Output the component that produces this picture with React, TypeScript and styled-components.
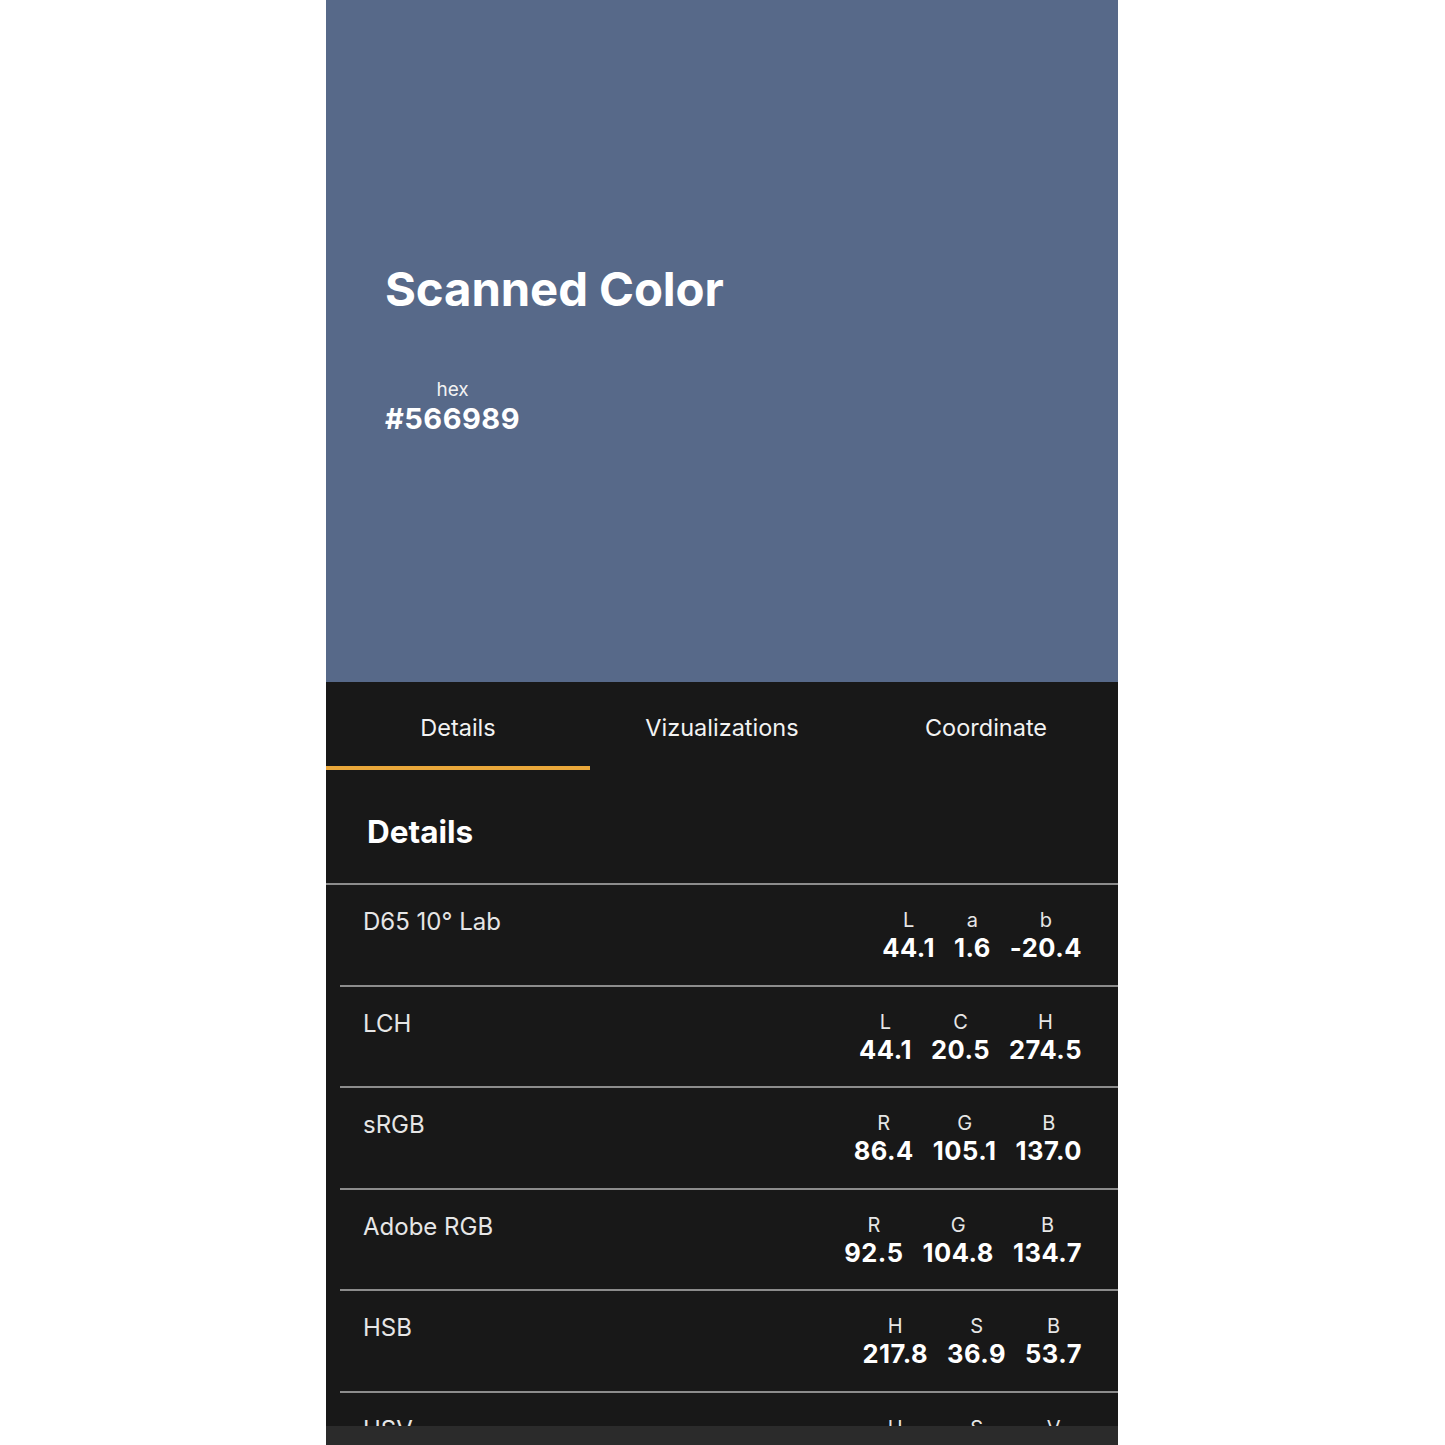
import React from "react";
import styled, { createGlobalStyle } from "styled-components";

const Global = createGlobalStyle`
  html, body { margin: 0; padding: 0; background: #ffffff; }
  body { font-family: Inter, "Noto Sans", "Liberation Sans", sans-serif; }
  * { box-sizing: border-box; }
`;

const Phone = styled.div`
  width: 792px;
  height: 1445px;
  margin: 0 0 0 326px;
  position: relative;
  overflow: hidden;
  display: flex;
  flex-direction: column;
  background: #181818;
`;

const Swatch = styled.section<{ $color: string }>`
  height: 682px;
  flex: none;
  background: ${(p) => p.$color};
  padding: 261px 0 0 59px;
  color: #ffffff;
`;

const Title = styled.h1`
  margin: 0;
  font-size: 47.3px;
  font-weight: 700;
  letter-spacing: -0.1px;
  line-height: 56px;
`;

const HexBlock = styled.div`
  margin-top: 60px;
  display: inline-flex;
  flex-direction: column;
  align-items: center;
`;

const HexLabel = styled.span`
  font-size: 19px;
  font-weight: 400;
  line-height: 25px;
  color: #f2f2f2;
`;

const HexValue = styled.span`
  font-size: 29px;
  font-weight: 700;
  line-height: 34px;
  letter-spacing: 0.5px;
`;

const Tabs = styled.nav`
  display: grid;
  grid-template-columns: repeat(3, 1fr);
  height: 88px;
  flex: none;
`;

const Tab = styled.div<{ $active?: boolean }>`
  display: flex;
  align-items: center;
  justify-content: center;
  padding-top: 6px;
  color: #f2f2f2;
  font-size: 23.5px;
  font-weight: 400;
  border-bottom: 4px solid ${(p) => (p.$active ? "#e9a73a" : "transparent")};
`;

const SectionHead = styled.h2`
  margin: 0;
  height: 115px;
  flex: none;
  display: flex;
  align-items: center;
  padding: 10px 0 0 41px;
  font-size: 31.5px;
  font-weight: 700;
  color: #ffffff;
  border-bottom: 2px solid #8c8c8c;
`;

const List = styled.div`
  display: flex;
  flex-direction: column;
`;

const Row = styled.div`
  height: 101.5px;
  flex: none;
  margin-left: 14px;
  padding: 22px 36px 0 23px;
  display: flex;
  justify-content: space-between;
  align-items: flex-start;
  border-bottom: 2px solid #8c8c8c;
`;

const RowLabel = styled.span`
  font-size: 24px;
  font-weight: 400;
  color: #e6e6e6;
  line-height: 30px;
  letter-spacing: 0px;
`;

const Values = styled.div`
  display: flex;
  gap: 19px;
  margin-top: 1px;
`;

const ValueCol = styled.div`
  display: flex;
  flex-direction: column;
  align-items: center;
`;

const Channel = styled.span`
  font-size: 20px;
  font-weight: 400;
  color: #e6e6e6;
  line-height: 24px;
`;

const Num = styled.span`
  font-size: 25.5px;
  font-weight: 700;
  color: #ffffff;
  line-height: 32px;
  letter-spacing: 0.5px;
`;

const BottomBar = styled.div`
  position: absolute;
  left: 0;
  right: 0;
  bottom: 0;
  height: 19px;
  background: #2b2b2b;
`;

type Space = { name: string; ch: [string, string][] };

const spaces: Space[] = [
  { name: "D65 10° Lab", ch: [["L", "44.1"], ["a", "1.6"], ["b", "-20.4"]] },
  { name: "LCH", ch: [["L", "44.1"], ["C", "20.5"], ["H", "274.5"]] },
  { name: "sRGB", ch: [["R", "86.4"], ["G", "105.1"], ["B", "137.0"]] },
  { name: "Adobe RGB", ch: [["R", "92.5"], ["G", "104.8"], ["B", "134.7"]] },
  { name: "HSB", ch: [["H", "217.8"], ["S", "36.9"], ["B", "53.7"]] },
  { name: "HSV", ch: [["H", "217.8"], ["S", "36.9"], ["V", "53.7"]] },
];

export default function App() {
  return (
    <>
      <Global />
      <Phone>
        <Swatch $color="#576989">
          <Title>Scanned Color</Title>
          <HexBlock>
            <HexLabel>hex</HexLabel>
            <HexValue>#566989</HexValue>
          </HexBlock>
        </Swatch>
        <Tabs>
          <Tab $active>Details</Tab>
          <Tab>Vizualizations</Tab>
          <Tab>Coordinate</Tab>
        </Tabs>
        <SectionHead>Details</SectionHead>
        <List>
          {spaces.map((s) => (
            <Row key={s.name}>
              <RowLabel>{s.name}</RowLabel>
              <Values>
                {s.ch.map(([c, v]) => (
                  <ValueCol key={c}>
                    <Channel>{c}</Channel>
                    <Num>{v}</Num>
                  </ValueCol>
                ))}
              </Values>
            </Row>
          ))}
        </List>
        <BottomBar />
      </Phone>
    </>
  );
}
